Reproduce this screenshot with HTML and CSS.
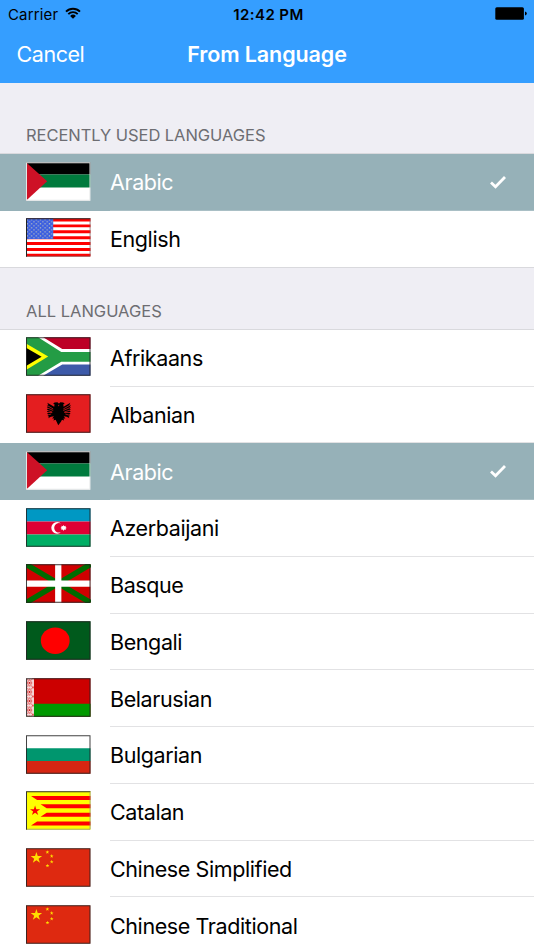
FILE: index.html
```html
<!DOCTYPE html>
<html lang="en">
<head>
<meta charset="utf-8">
<title>From Language</title>
<link rel="stylesheet" href="styles.css">
</head>
<body>
<svg class="defs" aria-hidden="true">
  <defs>
    <path id="star" d="M0-1 .225-.309H.951L.363.118.588.809 0 .382-.588.809-.363.118-.951-.309H-.225Z"/>
    <pattern id="stars" width="4.4" height="4" patternUnits="userSpaceOnUse">
      <path d="M.7.8h1.2v1.1H.7zM2.9 2.8h1.2v1.1H2.9z" fill="#b9bfc0"/>
    </pattern>
    <pattern id="ornament" width="7" height="9" patternUnits="userSpaceOnUse">
      <path d="M0 0h7v9H0z" fill="#f5dada"/>
      <path d="M3.5 1 6 4.5 3.500 8 1 4.500ZM0 0l2 2M7 0 5 2M0 9l2-2M7 9 5 7" fill="none" stroke="#d22" stroke-width=".7"/>
      <path d="M2.700 3.500h1.600v2H2.700z" fill="#c11"/>
    </pattern>
    <symbol id="flag-arabic" viewBox="0 0 64 38">
      <path d="M0 0h64v38H0z" fill="#fff"/><path d="M0 0h64v12H0z"/><path d="M0 12h64v13H0z" fill="#007a3d"/>
      <path d="M0 0 21 18.700 0 38Z" fill="#ce1126"/>
      <path d="M.5.5h63v37H.5z" fill="none" stroke="#e4e6e6"/>
    </symbol>
    <symbol id="flag-china" viewBox="0 0 64 38">
      <path d="M0 0h64v38H0z" fill="#de2910"/>
      <g fill="#ffde00">
        <use href="#star" transform="translate(10.300 9.500) scale(6)"/>
        <use href="#star" transform="translate(21.200 3.800) scale(2)"/>
        <use href="#star" transform="translate(25.500 7.700) scale(2)"/>
        <use href="#star" transform="translate(25.500 13.300) scale(2)"/>
        <use href="#star" transform="translate(21.300 17.200) scale(2)"/>
      </g>
    </symbol>
  </defs>
</svg>

<header class="top">
  <div class="status">
    <div class="carrier">Carrier
      <svg class="wifi" viewBox="0 0 16 12"><path d="M1 4.600a10 10 0 0 1 14 0M3.300 7.100a6.700 6.700 0 0 1 9.400 0" fill="none" stroke="#000" stroke-width="1.900"/><path d="M8 11.700 5.100 9a4.200 4.200 0 0 1 5.800 0Z"/></svg>
    </div>
    <div class="time">12:42 PM</div>
    <svg class="battery" viewBox="0 0 32 13"><rect x=".3" y=".3" width="28.600" height="12.400" rx="1.500"/><path d="M30 4.500q1.800.5 1.800 2T30 8.500Z"/></svg>
  </div>
  <nav class="nav">
    <span class="cancel">Cancel</span>
    <h1 class="title">From Language</h1>
  </nav>
</header>

<main>
  <h2 class="section first"><span class="recent-label">RECENTLY USED LANGUAGES</span></h2>
  <ul class="list recent">
    <li class="row selected">
      <svg class="flag"><use href="#flag-arabic"/></svg>
      <div class="cell"><span class="name">Arabic</span><svg class="check" viewBox="0 0 18 14"><path d="m2 7.500 4.500 4.200L16 2" fill="none" stroke="#fff" stroke-width="2.800"/></svg></div>
    </li>
    <li class="row">
      <svg class="flag" viewBox="0 0 64 38">
        <path d="M0 0h64v38H0z" fill="#fff"/>
        <path d="M0 1.700h64M0 7.500h64M0 13.300h64M0 19.200h64M0 25h64M0 30.900h64M0 36.500h64" stroke="#f00" stroke-width="2.900"/>
        <path d="M0 0h27v20.500H0z" fill="#3c5fe0"/><path d="M1 1h26v19H1z" fill="url(#stars)"/>
        <path d="M.5 38V.5H64" fill="none" stroke="#222"/><path d="M63.600 1v36.600H1" fill="none" stroke="#755" stroke-width=".7"/>
      </svg>
      <div class="cell"><span class="name">English</span></div>
    </li>
  </ul>

  <h2 class="section"><span>ALL LANGUAGES</span></h2>
  <ul class="list all">
    <li class="row">
      <svg class="flag" viewBox="0 0 64 38">
        <path d="M0 0h64v38H0z" fill="#fff"/><path d="M17 0h47v11.500H36Z" fill="#bd0026"/><path d="M17 38h47V27H36Z" fill="#3d5aa9"/>
        <path d="M0 0h12l23 14.500h29v9.800H35L12 38H0Z" fill="#249c45"/><path d="M0 6 22 19 0 32.500Z" fill="#ff0"/><path d="m0 10.300 15.500 8.900L0 28.500Z"/>
        <path class="frame" d="M.5.5h63v37H.5z"/>
      </svg>
      <div class="cell"><span class="name">Afrikaans</span></div>
    </li>
    <li class="row">
      <svg class="flag" viewBox="0 0 64 38">
        <path d="M0 0h64v38H0z" fill="#e41e20"/>
        <path d="m32 12 1.200-1.500-1-.7 1.800-2 3 .2 1.500 1.500-1.500.2.300 2.500L44 8.300l-1 2 1.500.3-1 1.500 1 .7-1.200 1.200 1.100.8-1.200 1.300 1.100.9-1.300 1.200 1.200 1-1.500 1.100 1.100 1-1.500 1 .8 1.300-2.700-1.300-3-.6 1.700 2.300-2-.1.800 2.100-2.200-.8-1 2L32 30.700 30.400 27.200l-1-2-2.200.8.800-2.100-2 .1 1.700-2.300-3 .6-2.700 1.300.8-1.300-1.500-1 1.100-1-1.500-1.100 1.200-1-1.300-1.200 1.100-.9-1.200-1.300 1.100-.8-1.200-1.200 1-.7-1-1.500 1.500-.3-1-2 6.900 3.900.3-2.500-1.500-.2 1.500-1.500 3-.2 1.800 2-1 .7Z"/>
        <path d="m20 10.500 7 4m-7-1.500 7 3m-7-.5 6 2m-6 .5h6m-6 3 5-1.500M44 10.500l-7 4m7-1.500-7 3m7-.5-6 2m6 .5h-6m6 3-5-1.500" stroke="#e41e20" stroke-width=".7"/>
        <path class="frame" d="M.5.5h63v37H.5z"/>
      </svg>
      <div class="cell"><span class="name">Albanian</span></div>
    </li>
    <li class="row selected">
      <svg class="flag"><use href="#flag-arabic"/></svg>
      <div class="cell"><span class="name">Arabic</span><svg class="check" viewBox="0 0 18 14"><path d="m2 7.500 4.500 4.200L16 2" fill="none" stroke="#fff" stroke-width="2.800"/></svg></div>
    </li>
    <li class="row">
      <svg class="flag" viewBox="0 0 64 38">
        <path d="M0 0h64v13H0z" fill="#0098c3"/><path d="M0 13h64v13H0z" fill="#e00034"/><path d="M0 26h64v12H0z" fill="#00ae65"/>
        <path d="M35 15.200a5.800 5.800 0 1 0 0 8.200 4.700 4.700 0 1 1 0-8.200Z" fill="#fff"/>
        <path d="m37.300 16.500.7 1.200 1.500-.4-.3 1.300 1.200.8-1.200.8.300 1.300-1.500-.4-.7 1.300-.7-1.300-1.500.4.300-1.300-1.200-.8 1.200-.8-.3-1.300 1.500.4Z" fill="#fff"/>
        <path class="frame" d="M.5.5h63v37H.5z"/>
      </svg>
      <div class="cell"><span class="name">Azerbaijani</span></div>
    </li>
    <li class="row">
      <svg class="flag" viewBox="0 0 64 38">
        <path d="M0 0h64v38H0z" fill="#d00000"/><path d="m0 0 64 38M64 0 0 38" stroke="#006b00" stroke-width="5.500"/><path d="M0 19.200h64M32 0v38" stroke="#fff" stroke-width="6.200"/>
        <path class="frame" d="M.5.5h63v37H.5z"/>
      </svg>
      <div class="cell"><span class="name">Basque</span></div>
    </li>
    <li class="row">
      <svg class="flag" viewBox="0 0 64 38">
        <path d="M0 0h64v38H0z" fill="#005a1c"/><ellipse cx="29" cy="19.200" rx="14.300" ry="13.200" fill="#f00"/>
        <path class="frame" d="M.5.5h63v37H.5z"/>
      </svg>
      <div class="cell"><span class="name">Bengali</span></div>
    </li>
    <li class="row">
      <svg class="flag" viewBox="0 0 64 38">
        <path d="M0 0h64v38H0z" fill="#c00"/><path d="M0 25.300h64V38H0z" fill="#090"/><path d="M0 0h7.700v38H0z" fill="#fff"/><path d="M.7 0h7v38h-7z" fill="url(#ornament)"/>
        <path class="frame" d="M.5.5h63v37H.5z"/>
      </svg>
      <div class="cell"><span class="name">Belarusian</span></div>
    </li>
    <li class="row">
      <svg class="flag" viewBox="0 0 64 38">
        <path d="M0 0h64v13H0z" fill="#fff"/><path d="M0 12.700h64v13H0z" fill="#00966e"/><path d="M0 25.500h64V38H0z" fill="#d62612"/>
        <path class="frame" d="M.5.5h63v37H.5z"/>
      </svg>
      <div class="cell"><span class="name">Bulgarian</span></div>
    </li>
    <li class="row">
      <svg class="flag" viewBox="0 0 64 38">
        <path d="M0 0h64v38H0z" fill="#ff0"/>
        <path d="M5 4.500h59v4H11ZM14.500 12.800H64v4H20.500ZM20.500 21.300H64v4H14.500ZM11 29.800h53v4H5Z" fill="#f00"/>
        <use href="#star" transform="translate(9 19.300) scale(5.300)" fill="#f00"/>
        <path d="M.5 38V.5H64" fill="none" stroke="#333"/><path d="M63.600 1v36.600H1" fill="none" stroke="#888" stroke-width=".7"/>
      </svg>
      <div class="cell"><span class="name">Catalan</span></div>
    </li>
    <li class="row">
      <svg class="flag" viewBox="0 0 64 38"><use href="#flag-china"/><path class="frame" d="M.5.5h63v37H.5z"/></svg>
      <div class="cell"><span class="name">Chinese Simplified</span></div>
    </li>
    <li class="row">
      <svg class="flag" viewBox="0 0 64 38"><use href="#flag-china"/><path class="frame" d="M.5.5h63v37H.5z"/></svg>
      <div class="cell"><span class="name">Chinese Traditional</span></div>
    </li>
  </ul>
</main>
</body>
</html>
```
FILE: styles.css
```css
* { box-sizing: border-box; }
html, body { height: 950px; overflow: hidden; }
body {
  margin: 0;
  background: #efeef4;
  color: #000;
  font-family: Inter, "Liberation Sans", sans-serif;
}
.defs { position: absolute; width: 0; height: 0; }
svg { display: block; flex: none; }

.top { height: 83px; background: #359eff; }
.status {
  height: 28px;
  padding: 0 7px 0 8px;
  display: grid;
  grid-template-columns: 1fr auto 1fr;
  align-items: center;
  font-size: 15px;
}
.carrier { display: flex; align-items: center; gap: 7px; letter-spacing: .15px; }
.wifi { width: 16px; height: 12px; margin-top: -2px; }
.time { padding-left: 2px; font-weight: 600; letter-spacing: .4px; }
.battery { width: 32px; height: 13px; justify-self: end; margin-top: -1px; }
.nav {
  height: 52px;
  padding: 0 16.5px;
  display: grid;
  grid-template-columns: 1fr auto 1fr;
  align-items: center;
  color: #fff;
  font-size: 21.5px;
}
.cancel { letter-spacing: -.45px; }
.title { margin: 0; font-size: 21.5px; font-weight: 600; letter-spacing: -.1px; }

.section {
  height: 62.75px;
  margin: 0;
  padding: 0 26px 8px;
  display: flex;
  align-items: flex-end;
  color: #6d6d72;
  font-size: 16.5px;
  font-weight: 400;
  line-height: 21px;
}
.section.first { height: 71px; }
.recent-label { letter-spacing: -.05px; }

.list { margin: 0; padding: 0; list-style: none; background: #fff; box-shadow: 0 -1px #d9d9dd, 0 1px #d9d9dd; }
.recent { height: 113px; }
.row { height: 56.75px; padding-left: 26px; display: flex; align-items: center; gap: 19.5px; }
.recent .row { height: 56.5px; }
.cell {
  flex: 1;
  height: 100%;
  padding-right: 27px;
  display: flex;
  align-items: center;
  justify-content: space-between;
  border-bottom: 1px solid #e2e2e4;
}
.list .row:last-child .cell { border-bottom: 0; }
.selected { background: #96b1b8; color: #fff; }
.selected .cell { border-color: #a9bfc5; }
.name { padding-top: 1px; font-size: 21.5px; line-height: 28px; letter-spacing: -.4px; }
.flag { width: 64.5px; height: 39px; margin-top: -2.5px; }
.frame { fill: none; stroke: #222; stroke-opacity: .85; }
.check { width: 18px; height: 14px; }
```
